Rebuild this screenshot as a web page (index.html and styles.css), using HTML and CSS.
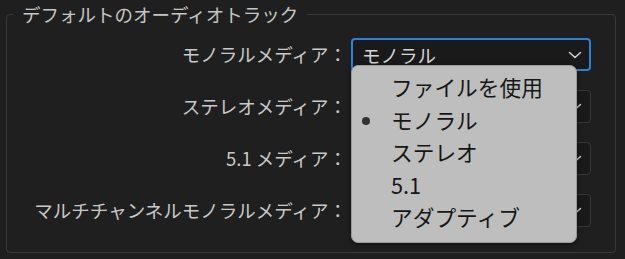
FILE: index.html
```html
<!DOCTYPE html>
<html lang="ja">
<head>
    <meta charset="UTF-8">
    <title>デフォルトのオーディオトラック</title>
    <link rel="stylesheet" href="styles.css">
</head>
<body>
    <fieldset class="track-group">
        <legend class="track-legend">デフォルトのオーディオトラック</legend>

        <div class="track-row">
            <span class="track-label">モノラルメディア：</span>
            <div class="select-wrap">
                <div class="select is-open">
                    <span class="select-value">モノラル</span>
                    <svg class="chevron" width="14" height="8" viewBox="0 0 14 8"><path d="M1.5 1.5 L7 6.5 L12.5 1.5" fill="none" stroke="#d2d2d2" stroke-width="1.5" stroke-linecap="round" stroke-linejoin="round"/></svg>
                </div>
                <!-- open dropdown menu -->
                <ul class="menu">
                    <li class="menu-item">ファイルを使用</li>
                    <li class="menu-item is-checked">モノラル</li>
                    <li class="menu-item">ステレオ</li>
                    <li class="menu-item">5.1</li>
                    <li class="menu-item">アダプティブ</li>
                </ul>
            </div>
        </div>

        <!-- values of these selects sit under the open menu -->
        <div class="track-row">
            <span class="track-label">ステレオメディア：</span>
            <div class="select-wrap">
                <div class="select">
                    <span class="select-value"></span>
                    <svg class="chevron" width="14" height="8" viewBox="0 0 14 8"><path d="M1.5 1.5 L7 6.5 L12.5 1.5" fill="none" stroke="#d2d2d2" stroke-width="1.5" stroke-linecap="round" stroke-linejoin="round"/></svg>
                </div>
            </div>
        </div>

        <div class="track-row">
            <span class="track-label">5.1 メディア：</span>
            <div class="select-wrap">
                <div class="select">
                    <span class="select-value"></span>
                    <svg class="chevron" width="14" height="8" viewBox="0 0 14 8"><path d="M1.5 1.5 L7 6.5 L12.5 1.5" fill="none" stroke="#d2d2d2" stroke-width="1.5" stroke-linecap="round" stroke-linejoin="round"/></svg>
                </div>
            </div>
        </div>

        <div class="track-row">
            <span class="track-label">マルチチャンネルモノラルメディア：</span>
            <div class="select-wrap">
                <div class="select">
                    <span class="select-value"></span>
                    <svg class="chevron" width="14" height="8" viewBox="0 0 14 8"><path d="M1.5 1.5 L7 6.5 L12.5 1.5" fill="none" stroke="#d2d2d2" stroke-width="1.5" stroke-linecap="round" stroke-linejoin="round"/></svg>
                </div>
            </div>
        </div>
    </fieldset>
</body>
</html>
```

FILE: styles.css
```css
* {
    box-sizing: border-box;
    margin: 0;
    padding: 0;
}

body {
    font-family: "Noto Sans CJK JP", "Noto Sans", sans-serif;
    background-color: #1f1f1f;
    color: #c9c9c9;
    width: 625px;
    height: 259px;
    overflow: hidden;
}

.track-group {
    margin: 0 9px 0 6px;
    height: 253px;
    border: 1px solid #393939;
    border-radius: 4px;
    padding: 10px 24px 0 6px;
    display: flex;
    flex-direction: column;
    gap: 19px;
}

.track-legend {
    font-size: 18.5px;
    line-height: 28px;
    padding: 0 9px;
    color: #c6c6c6;
}

.track-row {
    display: flex;
    justify-content: flex-end;
    align-items: center;
    gap: 4px;
}

.track-label {
    font-size: 18.5px;
    line-height: 33px;
    white-space: nowrap;
}

.select-wrap {
    position: relative;
    width: 240px;
}

.select {
    height: 33px;
    border: 1px solid #383838;
    border-radius: 4px;
    background-color: #1a1a1a;
    display: flex;
    align-items: center;
    justify-content: space-between;
    padding: 0 8px 0 10px;
    font-size: 18.5px;
    color: #d4d4d4;
}

.select.is-open {
    border: 2px solid #2b82d9;
    padding: 0 7px 0 9px;
}

.chevron {
    display: block;
}

.menu {
    position: absolute;
    top: 27px;
    left: 0;
    width: 226px;
    list-style: none;
    background-color: #bebebe;
    border: 1px solid #9a9a9a;
    border-radius: 7px;
    padding: 5px 0 8px 39px;
    box-shadow: 0 2px 6px rgba(0, 0, 0, 0.4);
    z-index: 10;
}

.menu-item {
    position: relative;
    font-size: 21.7px;
    line-height: 32.6px;
    color: #161616;
}

.menu-item.is-checked::before {
    content: "";
    position: absolute;
    left: -29px;
    top: 13px;
    width: 8px;
    height: 8px;
    border-radius: 50%;
    background-color: #333;
}
```
